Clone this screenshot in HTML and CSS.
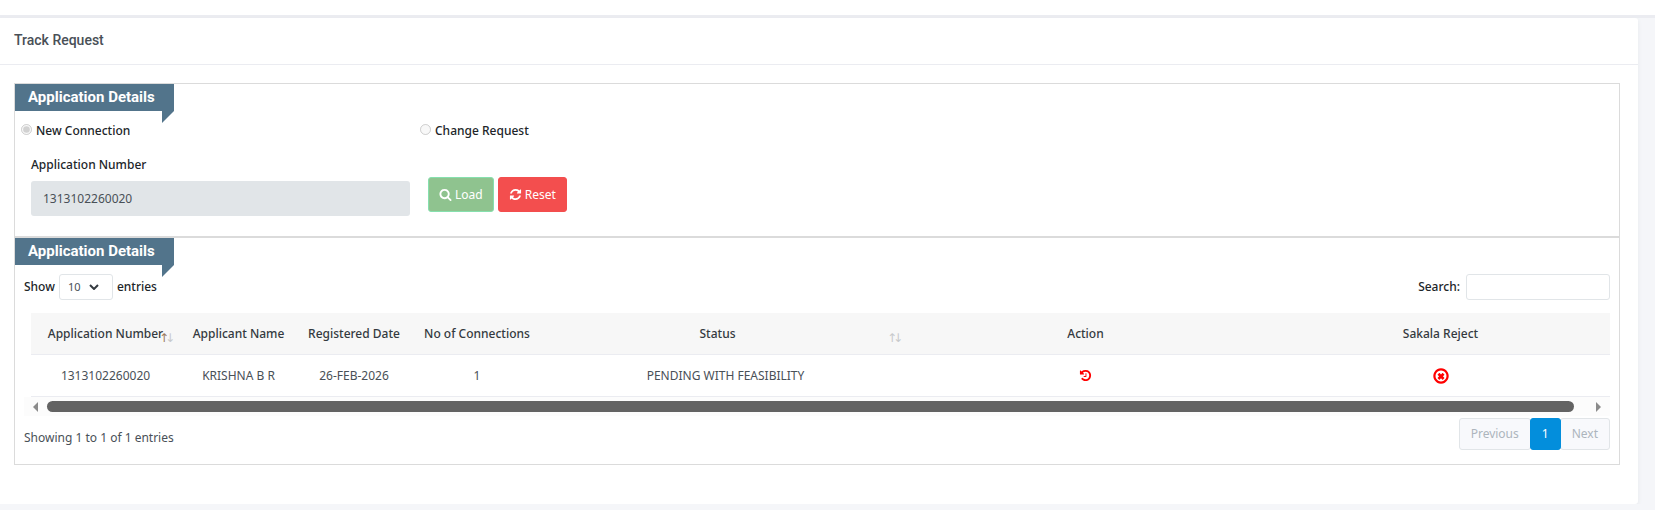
FILE: index.html
```html
<!doctype html>
<html lang="en">
    <head>
        <meta charset="utf-8">
        <title>Track Request</title>
        <link rel="stylesheet" href="styles.css">
    </head>
    <body>
        <div class="topbar"></div>
        <div class="card">
            <div class="card-header">
                <h4>Track Request</h4>
            </div>
            <div class="card-body">
                <!-- Search form -->
                <section class="panel">
                    <h5 class="ribbon">Application Details</h5>
                    <div class="radios">
                        <label class="radio"><input type="radio" name="type" checked disabled>New Connection</label>
                        <label class="radio"><input type="radio" name="type" disabled>Change Request</label>
                    </div>
                    <div class="form-row">
                        <div class="form-group">
                            <label for="appno">Application Number</label>
                            <input type="text" id="appno" class="form-control" value="1313102260020" readonly>
                        </div>
                        <div class="buttons">
                            <button type="button" class="btn btn-success" disabled>
                                <svg class="icon" viewBox="0 0 1792 1792"><path d="M1216 832q0-185-131.5-316.5t-316.5-131.5-316.5 131.5-131.5 316.5 131.5 316.5 316.5 131.5 316.5-131.5 131.5-316.5zm512 832q0 52-38 90t-90 38q-54 0-90-38l-343-342q-179 124-399 124-143 0-273.5-55.5t-225-150-150-225-55.5-273.5 55.5-273.5 150-225 225-150 273.5-55.5 273.5 55.5 225 150 150 225 55.5 273.5q0 220-124 399l343 343q37 37 37 90z"/></svg>
                                Load
                            </button>
                            <button type="button" class="btn btn-danger">
                                <svg class="icon" viewBox="0 0 1792 1792"><path d="M1639 1056q0 5-1 7-64 268-268 434.5t-478 166.5q-146 0-282.5-55t-243.5-157l-129 129q-19 19-45 19t-45-19-19-45v-448q0-26 19-45t45-19h448q26 0 45 19t19 45-19 45l-137 137q71 66 161 102t187 36q134 0 250-65t186-179q11-17 53-117 8-23 30-23h192q13 0 22.5 9.5t9.5 22.5zm25-800v448q0 26-19 45t-45 19h-448q-26 0-45-19t-19-45 19-45l138-138q-148-137-349-137-134 0-250 65t-186 179q-11 17-53 117-8 23-30 23h-199q-13 0-22.5-9.5t-9.5-22.5v-7q65-268 270-434.5t480-166.5q146 0 284 55.5t245 156.5l130-129q19-19 45-19t45 19 19 45z"/></svg>
                                Reset
                            </button>
                        </div>
                    </div>
                </section>

                <!-- Results -->
                <section class="panel">
                    <h5 class="ribbon">Application Details</h5>
                    <div class="results">
                        <div class="table-tools">
                            <label class="length">Show
                                <span class="select-wrap">
                                    <select>
                                        <option>10</option>
                                        <option>25</option>
                                        <option>50</option>
                                        <option>100</option>
                                    </select>
                                    <svg class="chevron" viewBox="0 0 10 6"><path d="M1 1l4 4 4-4"/></svg>
                                </span>
                                entries
                            </label>
                            <label class="filter">Search: <input type="search"></label>
                        </div>
                        <div class="table-scroll">
                            <table>
                                <thead>
                                    <tr>
                                        <th class="col-number sorting asc">Application Number</th>
                                        <th class="col-name">Applicant Name</th>
                                        <th class="col-date">Registered Date</th>
                                        <th class="col-count">No of Connections</th>
                                        <th class="col-status sorting">Status</th>
                                        <th>Action</th>
                                        <th>Sakala Reject</th>
                                    </tr>
                                </thead>
                                <tbody>
                                    <tr>
                                        <td>1313102260020</td>
                                        <td>KRISHNA B R</td>
                                        <td>26-FEB-2026</td>
                                        <td>1</td>
                                        <td>PENDING WITH FEASIBILITY</td>
                                        <td><a href="#" class="row-action" aria-label="History"><svg class="icon" viewBox="0 0 1792 1792"><path d="M1664 896q0 156-61 298t-164 245-245 164-298 61q-172 0-327-72.5t-264-204.5q-7-10-6.5-22.5t8.5-20.5l137-138q10-9 25-9 16 2 23 12 73 95 179 147t225 52q104 0 198.5-40.5t163.5-109.5 109.5-163.5 40.5-198.5-40.5-198.5-109.5-163.5-163.5-109.5-198.5-40.5q-98 0-188 35.5t-160 101.5l137 138q31 30 14 69-17 40-59 40h-448q-26 0-45-19t-19-45v-448q0-42 40-59 39-17 69 14l130 129q107-101 244.5-156.5t284.5-55.5q156 0 298 61t245 164 164 245 61 298zm-640-288v448q0 14-9 23t-23 9h-320q-14 0-23-9t-9-23v-64q0-14 9-23t23-9h224v-352q0-14 9-23t23-9h64q14 0 23 9t9 23z"/></svg></a></td>
                                        <td><a href="#" class="row-action" aria-label="Reject"><svg class="icon icon-lg" viewBox="0 0 1792 1792"><path d="M1225 1111l-146 146q-10 10-23 10t-23-10l-137-137-137 137q-10 10-23 10t-23-10l-146-146q-10-10-10-23t10-23l137-137-137-137q-10-10-10-23t10-23l146-146q10-10 23-10t23 10l137 137 137-137q10-10 23-10t23 10l146 146q10 10 10 23t-10 23l-137 137 137 137q10 10 10 23t-10 23zm215-215q0-148-73-273t-198-198-273-73-273 73-198 198-73 273 73 273 198 198 273 73 273-73 198-198 73-273zm224 0q0 209-103 385.5t-279.5 279.5-385.5 103-385.5-103-279.5-279.5-103-385.5 103-385.5 279.5-279.5 385.5-103 385.5 103 279.5 279.5 103 385.5z"/></svg></a></td>
                                    </tr>
                                </tbody>
                            </table>
                        </div>
                        <div class="scrollbar">
                            <span class="arrow-left"></span>
                            <span class="thumb"></span>
                            <span class="arrow-right"></span>
                        </div>
                        <div class="table-footer">
                            <div class="info">Showing 1 to 1 of 1 entries</div>
                            <nav class="pagination">
                                <a href="#" class="disabled">Previous</a>
                                <a href="#" class="active">1</a>
                                <a href="#" class="disabled">Next</a>
                            </nav>
                        </div>
                    </div>
                </section>
            </div>
        </div>
    </body>
</html>
```

FILE: styles.css
```css
* {
    box-sizing: border-box;
}
body {
    margin: 0;
    background-color: #f5f6f9;
    color: #495057;
    font-family: "Noto Sans", sans-serif;
    font-size: 12px;
    line-height: 20px;
}
h4, h5 {
    margin: 0;
    font-family: Roboto, sans-serif;
}
input, select, button {
    font: inherit;
    color: inherit;
}
label {
    color: #212529;
    font-weight: 500;
}
.icon {
    width: 13px;
    height: 13px;
    fill: currentColor;
}
.icon-lg {
    width: 18px;
    height: 18px;
}
.topbar {
    height: 18px;
    background-color: #fff;
    border-bottom: 3px solid #ebecf1;
}
.card {
    margin-right: 17px;
    padding-bottom: 39px;
    background-color: #fff;
    border-radius: 0 3px 3px 0;
    box-shadow: 0 2px 4px #e6e8ed;
}
.card-header {
    padding: 12px 14px 14px;
    border-bottom: 1px solid #ebecf1;
}
.card-header h4 {
    font-size: 14px;
    font-weight: 500;
    line-height: 20px;
}
.card-body {
    padding: 18px 18px 0 14px;
}
.panel {
    border: 1px solid #dbdbdb;
}

/* ribbon heading with the folded corner */
.ribbon {
    position: relative;
    width: 159px;
    padding: 0 13px;
    background-color: #52748b;
    color: #fff;
    font-size: 15px;
    font-weight: 700;
    line-height: 27px;
    white-space: nowrap;
}
.ribbon::after {
    content: "";
    position: absolute;
    top: 100%;
    right: 0;
    border-top: 12px solid #52748b;
    border-right: 12px solid transparent;
}

/* form */
.radios {
    display: grid;
    grid-template-columns: 399px 1fr;
    padding: 10px 6px 0;
}
.radio {
    display: flex;
    align-items: center;
    gap: 4px;
}
.radio input {
    width: 11px;
    height: 11px;
    margin: 0 0 3px;
}
.form-row {
    display: flex;
    gap: 18px;
    padding: 14px 16px 20px;
}
.form-group {
    width: calc(25% - 14px);
}
.form-group label {
    display: block;
    margin-bottom: 6px;
}
.form-control {
    display: block;
    width: 100%;
    height: 35px;
    padding: 0 12px;
    border: 0;
    border-radius: 3px;
    background-color: #e1e5e8;
}
.buttons {
    display: flex;
    gap: 4px;
    padding-top: 22px;
}
.btn {
    display: flex;
    align-items: center;
    gap: 3px;
    height: 35px;
    padding: 0 10px;
    border: 1px solid;
    border-radius: 3px;
    color: #fff;
}
.btn-success {
    background-color: #8fc38f;
    border-color: #86e0ae;
}
.btn-danger {
    background-color: #f34e4e;
    border-color: #f34e4e;
}

/* results */
.results {
    padding: 9px 9px 14px;
}
.table-tools, .table-footer {
    display: flex;
    justify-content: space-between;
}
.length, .filter {
    display: flex;
    align-items: center;
    gap: 4px;
}
.filter {
    gap: 6px;
}
.select-wrap {
    position: relative;
}
.select-wrap select {
    display: block;
    width: 54px;
    height: 26px;
    padding: 0 8px;
    border: 1px solid #e1e5e8;
    border-radius: 3px;
    background-color: #fff;
    appearance: none;
    font-size: 11px;
    font-weight: 400;
    color: #495057;
}
.chevron {
    position: absolute;
    top: 10px;
    right: 14px;
    width: 10px;
    height: 6px;
    fill: none;
    stroke: #343a40;
    stroke-width: 2;
    pointer-events: none;
}
.filter input {
    width: 144px;
    height: 26px;
    border: 1px solid #e1e5e8;
    border-radius: 3px;
    background-color: #fff;
}
.table-scroll {
    margin-top: 13px;
    padding-left: 7px;
    overflow: hidden;
}
table {
    width: calc(100% + 8px);
    table-layout: fixed;
    border-spacing: 0;
}
th, td {
    height: 42px;
    padding: 0;
    border-bottom: 1px solid #ebecf1;
    text-align: center;
    white-space: nowrap;
}
th {
    background-color: #f7f7f7;
    color: #343a40;
    font-weight: 500;
}
.col-number { width: 149px; }
.col-name { width: 117px; }
.col-date { width: 114px; }
.col-count { width: 132px; }
.col-status { width: 23%; }
.sorting {
    position: relative;
}
.sorting::before, .sorting::after {
    position: absolute;
    bottom: 6px;
    color: #c8cacc;
    font-family: "DejaVu Sans", sans-serif;
    font-size: 12px;
    font-weight: 400;
    line-height: 20px;
}
.sorting::before {
    content: "↑";
    right: 11px;
}
.sorting::after {
    content: "↓";
    right: 5px;
}
.sorting.asc::before {
    color: #9a7b5c;
}
.col-status.sorting {
    padding-right: 16px;
}
.row-action {
    display: flex;
    justify-content: center;
    color: #f00;
}
.scrollbar {
    display: flex;
    align-items: center;
    height: 19px;
    padding: 0 9px;
    background-color: #fcfcfc;
}
.thumb {
    flex: 1;
    height: 11px;
    margin: 0 22px 0 9px;
    border-radius: 6px;
    background-color: #636363;
}
.arrow-left, .arrow-right {
    border: 5px solid transparent;
}
.arrow-left {
    border-left: 0;
    border-right-color: #8b8b8b;
}
.arrow-right {
    border-right: 0;
    border-left-color: #8b8b8b;
}
.table-footer {
    padding-top: 2px;
}
.info {
    padding-top: 10px;
}
.pagination {
    display: flex;
}
.pagination a {
    padding: 5px 11px;
    border: 1px solid #e1e5e8;
    border-radius: 3px;
    background-color: #f8f9fc;
    color: #adb5bd;
    text-decoration: none;
}
.pagination a + a {
    margin-left: -1px;
}
.pagination .active {
    z-index: 1;
    border-color: #038edc;
    background-color: #038edc;
    color: #fff;
}
```
